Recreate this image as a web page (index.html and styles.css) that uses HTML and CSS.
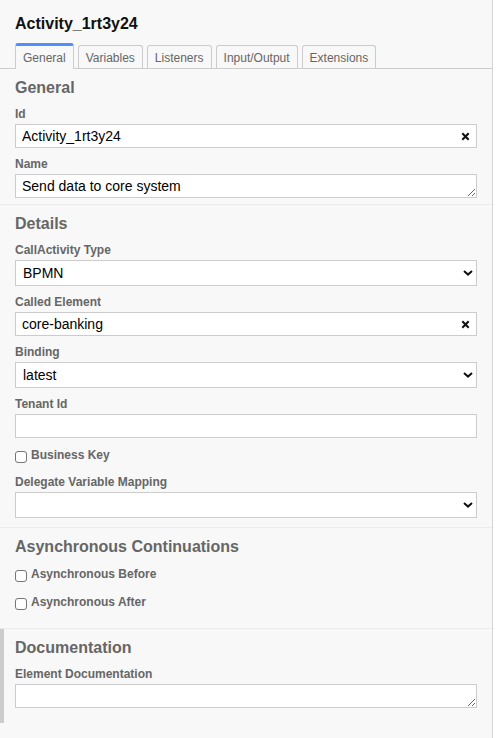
FILE: index.html
```html
<!DOCTYPE html>
<html lang="en">
<head>
<meta charset="utf-8">
<title>Properties Panel</title>
<link rel="stylesheet" href="styles.css">
</head>
<body>
<div class="panel">
  <div class="header"><div class="title">Activity_1rt3y24</div></div>
  <div class="tabs">
    <a class="tab active">General</a>
    <a class="tab">Variables</a>
    <a class="tab">Listeners</a>
    <a class="tab">Input/Output</a>
    <a class="tab">Extensions</a>
  </div>

  <div class="group group-general">
    <div class="group-header">General</div>
    <div class="entry">
      <label class="label">Id</label>
      <div class="field">
        <input class="input has-clear" type="text" value="Activity_1rt3y24">
        <span class="clear"><svg width="9" height="9" viewBox="0 0 9 9"><path d="M1.3 1.3 L7.7 7.7 M7.7 1.3 L1.3 7.7" stroke="#111" stroke-width="2.1" fill="none"/></svg></span>
      </div>
    </div>
    <div class="entry">
      <label class="label">Name</label>
      <div class="field">
        <textarea class="input textarea" rows="1">Send data to core system</textarea>
      </div>
    </div>
  </div>

  <div class="group group-details">
    <div class="group-header">Details</div>
    <div class="entry">
      <label class="label">CallActivity Type</label>
      <div class="field">
        <select class="input select"><option>BPMN</option></select>
        <span class="chevron"><svg width="10" height="6" viewBox="0 0 10 6"><path d="M1 1 L5 4.6 L9 1" stroke="#111" stroke-width="2" fill="none"/></svg></span>
      </div>
    </div>
    <div class="entry">
      <label class="label">Called Element</label>
      <div class="field">
        <input class="input has-clear" type="text" value="core-banking">
        <span class="clear"><svg width="9" height="9" viewBox="0 0 9 9"><path d="M1.3 1.3 L7.7 7.7 M7.7 1.3 L1.3 7.7" stroke="#111" stroke-width="2.1" fill="none"/></svg></span>
      </div>
    </div>
    <div class="entry">
      <label class="label">Binding</label>
      <div class="field">
        <select class="input select"><option>latest</option></select>
        <span class="chevron"><svg width="10" height="6" viewBox="0 0 10 6"><path d="M1 1 L5 4.6 L9 1" stroke="#111" stroke-width="2" fill="none"/></svg></span>
      </div>
    </div>
    <div class="entry">
      <label class="label">Tenant Id</label>
      <div class="field">
        <input class="input" type="text" value="">
      </div>
    </div>
    <div class="entry check-entry">
      <input class="checkbox" type="checkbox" id="bk">
      <label class="check-label" for="bk">Business Key</label>
    </div>
    <div class="entry">
      <label class="label">Delegate Variable Mapping</label>
      <div class="field">
        <select class="input select"><option></option></select>
        <span class="chevron"><svg width="10" height="6" viewBox="0 0 10 6"><path d="M1 1 L5 4.6 L9 1" stroke="#111" stroke-width="2" fill="none"/></svg></span>
      </div>
    </div>
  </div>

  <div class="group group-async">
    <div class="group-header">Asynchronous Continuations</div>
    <div class="entry check-entry">
      <input class="checkbox" type="checkbox" id="ab">
      <label class="check-label" for="ab">Asynchronous Before</label>
    </div>
    <div class="entry check-entry">
      <input class="checkbox" type="checkbox" id="aa">
      <label class="check-label" for="aa">Asynchronous After</label>
    </div>
  </div>

  <div class="group group-doc">
    <div class="group-header">Documentation</div>
    <div class="entry">
      <label class="label">Element Documentation</label>
      <div class="field">
        <textarea class="input textarea" rows="1"></textarea>
      </div>
    </div>
  </div>
</div>
</body>
</html>
```

FILE: styles.css
```css
html, body {
  margin: 0;
  padding: 0;
  background: #ffffff;
}

body {
  font-family: "Liberation Sans", Arial, sans-serif;
  font-size: 14px;
}

.panel {
  box-sizing: border-box;
  width: 493px;
  min-height: 738px;
  background: #f8f8f8;
  border-right: 1px solid #d4d4d4;
}

.header {
  padding: 15px 15px 0;
}

.title {
  font-size: 16px;
  line-height: 18px;
  font-weight: bold;
  color: #111;
}

.tabs {
  display: flex;
  align-items: flex-end;
  gap: 4px;
  margin-top: 10px;
  padding: 0 15px;
  border-bottom: 1px solid #ccc;
}

.tab {
  position: relative;
  display: block;
  font-size: 12px;
  line-height: 14px;
  color: #666;
  padding: 5px 7px 3px;
  border: 1px solid #ccc;
  border-bottom: none;
  border-radius: 3px 3px 0 0;
  background: #f8f8f8;
  text-decoration: none;
}

.tab.active {
  border-top: 3px solid #4d90ff;
  padding-bottom: 4px;
  margin-bottom: -1px;
}

.group {
  padding: 10px 15px 0;
}

.group + .group {
  border-top: 1px solid #ececec;
}

.group-details {
  padding-bottom: 3px;
}

.group-async {
  padding-bottom: 9px;
}

.group-doc {
  padding-bottom: 9px;
  box-shadow: inset 4px 0 0 #cccccc;
}

.group-header {
  font-size: 16px;
  line-height: 18px;
  font-weight: bold;
  color: #666;
  margin-bottom: 7px;
}

.entry {
  margin-bottom: 6px;
}

.label {
  display: block;
  font-size: 12px;
  line-height: 14px;
  font-weight: bold;
  color: #666;
  padding-top: 3px;
  margin-bottom: 3px;
}

.field {
  position: relative;
}

.input {
  display: block;
  box-sizing: border-box;
  width: 100%;
  height: 24px;
  margin: 0;
  padding: 3px 6px;
  border: 1px solid #ccc;
  border-radius: 0;
  background: #fff;
  font-family: "Liberation Sans", Arial, sans-serif;
  font-size: 14px;
  line-height: 16px;
  color: #000;
  outline: none;
}

.has-clear {
  padding-right: 24px;
}

.textarea {
  resize: both;
}

.select {
  -webkit-appearance: none;
  appearance: none;
  height: 26px;
  padding: 0 24px 0 7px;
}

.clear {
  position: absolute;
  right: 7px;
  top: 50%;
  width: 9px;
  height: 9px;
  margin-top: -4.5px;
  display: flex;
}

.chevron {
  position: absolute;
  right: 4px;
  top: 50%;
  width: 10px;
  height: 6px;
  margin-top: -3px;
  display: flex;
  pointer-events: none;
}

.check-entry {
  display: flex;
  align-items: flex-start;
  padding: 4px 0;
  height: 14px;
}

.checkbox {
  -webkit-appearance: none;
  appearance: none;
  flex-shrink: 0;
  box-sizing: border-box;
  width: 12px;
  height: 12px;
  margin: 3px 4px 0 0;
  border: 1px solid #767676;
  border-radius: 3px;
  background: #fff;
}

.check-label {
  font-size: 12px;
  line-height: 14px;
  font-weight: bold;
  color: #666;
}
```
